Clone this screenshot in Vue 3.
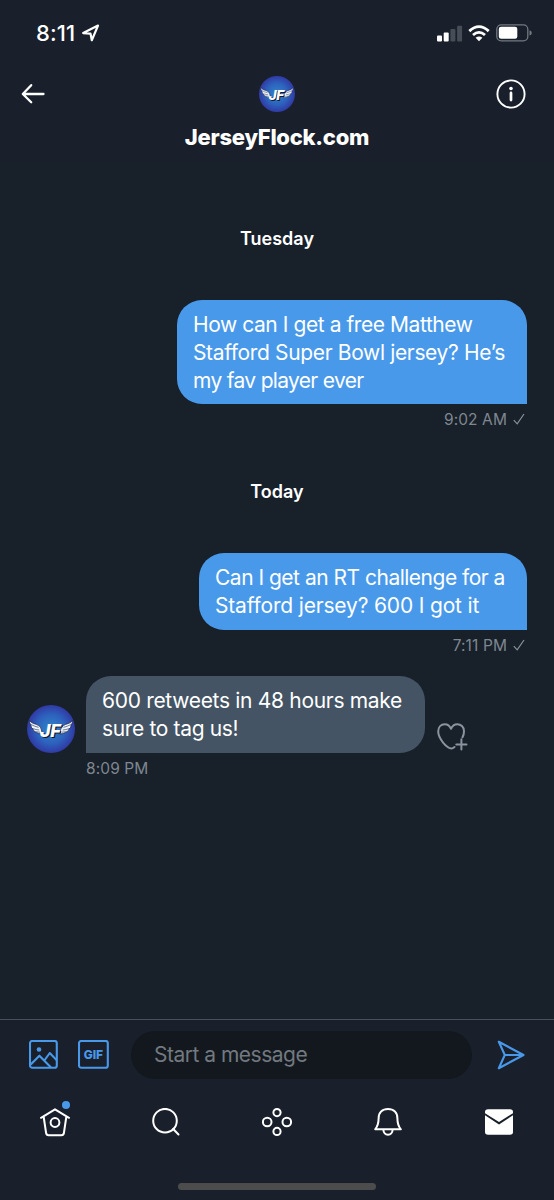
<script setup>
const conversation = [
  {
    day: 'Tuesday',
    cls: 'tuesday',
    messages: [
      { id: 'm1', mine: true, time: '9:02 AM', lines: ['How can I get a free Matthew', 'Stafford Super Bowl jersey? He’s', 'my fav player ever'] },
    ],
  },
  {
    day: 'Today',
    cls: 'today',
    messages: [
      { id: 'm2', mine: true, time: '7:11 PM', lines: ['Can I get an RT challenge for a', 'Stafford jersey? 600 I got it'] },
      { id: 'm3', mine: false, time: '8:09 PM', lines: ['600 retweets in 48 hours make', 'sure to tag us!'] },
    ],
  },
]
</script>

<template>
  <div class="phone">
    <svg class="defs" width="0" height="0" aria-hidden="true">
      <defs>
        <radialGradient id="badge">
          <stop offset="0" stop-color="#3186c8" />
          <stop offset="0.6" stop-color="#2d62bd" />
          <stop offset="1" stop-color="#303aa5" />
        </radialGradient>
        <g id="wing">
          <path d="M2.5 15.5 Q4.2 18.2 9.6 19.5 Q14 20.8 14.5 25 L15.2 29 Q11.2 29 9.2 27.2 Q6 26.2 6 24 Q3.6 22.5 4 20.3 Q2.3 18 2.5 15.5Z" fill="#eef3fa" stroke="#18233e" stroke-width=".7" />
          <path d="M4 19.5 Q8 21.5 11.5 22.4 M6 23.6 Q9 24.8 12.2 25 M9 26.8 L13 27.2" fill="none" stroke="#50617c" stroke-width=".8" />
        </g>
        <symbol id="team" viewBox="0 0 48 48">
          <circle cx="24" cy="24" r="24" fill="url(#badge)" />
          <use href="#wing" />
          <use href="#wing" transform="translate(48 0) scale(-1 1)" />
          <text x="14.3" y="33.2" class="team-text" fill="#101b32">JF</text>
          <text x="13" y="32" class="team-text" fill="#fff">JF</text>
        </symbol>
      </defs>
    </svg>

    <div class="status">
      <span class="clock">8:11</span>
      <svg class="location" width="18" height="18" viewBox="0 0 18 18"><path d="M1.2 9.1 16 1.6 9.8 16.2 8.5 9.6Z" /></svg>
      <div class="indicators">
        <svg width="26" height="17" viewBox="0 0 26 17">
          <rect x="0" y="10.5" width="5" height="6" rx="1" fill="#fff" />
          <rect x="6.7" y="7.5" width="5" height="9" rx="1" fill="#fff" />
          <rect x="13.4" y="4" width="5" height="12.5" rx="1" fill="#474d57" />
          <rect x="20.1" y="0.7" width="5" height="15.8" rx="1" fill="#474d57" />
        </svg>
        <svg class="wifi" width="22" height="17" viewBox="0 0 22 17">
          <g fill="none" stroke="#fff" stroke-width="2.8"><path d="M1.3 6.1Q11 -2.8 20.7 6.1" /><path d="M5 10Q11 4.7 17 10" /></g>
          <path d="M7.6 12.8Q11 10 14.4 12.8L11 16.3Z" fill="#fff" />
        </svg>
        <svg width="36" height="18" viewBox="0 0 36 18">
          <rect x=".8" y=".8" width="31" height="16" rx="4.4" fill="none" stroke="#737981" stroke-width="1.3" />
          <rect x="2.8" y="2.8" width="18.5" height="12" rx="2.3" fill="#fff" />
          <path d="M33.5 6.3q2.3 .6 2.3 2.6t-2.3 2.6z" fill="#737981" />
        </svg>
      </div>
    </div>

    <header>
      <svg class="back" width="24" height="22" viewBox="0 0 24 22"><path d="M10.2 2.2 1.8 11l8.4 8.2M2.2 11H22.5" /></svg>
      <div class="profile">
        <svg class="avatar-small"><use href="#team" /></svg>
        <h1><span>JerseyFlock.com</span></h1>
      </div>
      <svg class="info" width="30" height="30" viewBox="0 0 30 30">
        <circle cx="15" cy="15" r="13.6" fill="none" stroke="#fff" stroke-width="1.9" />
        <circle cx="15" cy="9.5" r="1.8" fill="#fff" /><path d="M15 13.9v7.2" stroke="#fff" stroke-width="2.7" stroke-linecap="round" />
      </svg>
    </header>

    <main>
      <section v-for="group in conversation" :key="group.day" :class="group.cls">
        <h2><span>{{ group.day }}</span></h2>
        <article v-for="m in group.messages" :key="m.id" :class="[m.mine ? 'sent' : 'received', m.id]">
          <div class="message-row">
            <svg v-if="!m.mine" class="avatar"><use href="#team" /></svg>
            <div class="bubble">
              <div v-for="(line, i) in m.lines" :key="line" class="line" :class="'l' + i"><span>{{ line }}</span></div>
            </div>
            <svg v-if="!m.mine" class="react" width="31" height="28" viewBox="0 0 31 28">
              <path d="M25.5 14.3Q27 11.5 27 8.2C27 3.7 23.8 1.2 20.3 1.2Q16 1.2 14 5.8Q12 1.2 7.8 1.2C3.7 1.2 1.2 4.3 1.2 8.6C1.2 15.5 9.8 25.2 14.4 25.4Q15.7 25.5 17.5 24" /><path d="M24.4 16.3v10.2M19.3 21.4h10.2" />
            </svg>
          </div>
          <div class="meta"><span>{{ m.time }}</span><svg v-if="m.mine" width="12" height="12" viewBox="0 0 12 12"><path d="m.8 7.2 3.4 3.7L11 1" /></svg></div>
        </article>
      </section>
    </main>

    <div class="composer">
      <svg width="29" height="29" viewBox="0 0 29 29"><rect x="1" y="1" width="26.8" height="26.8" rx="2.3" /><circle cx="10" cy="9.5" r="2.3" class="solid" /><path d="m1.7 24.5 8.7-8.8L22 27.5M15.3 20.5l5.5-7.5 7 7.4" /></svg>
      <svg class="gif" width="31" height="29" viewBox="0 0 31 29"><rect x="1" y="1" width="28.8" height="26.8" rx="2.3" /><text x="15.4" y="18.8" text-anchor="middle">GIF</text></svg>
      <div class="input"><span>Start a message</span></div>
      <svg class="send" width="28" height="30" viewBox="0 0 28 30"><path d="M1.8 1.8 26.5 15 1.8 28.2 7.8 15Z M7.8 15H26" /></svg>
    </div>

    <nav>
      <div class="home">
        <svg width="30" height="29" viewBox="0 0 30 29"><path d="M1 9.8 15 1.3 29 9.8M3.7 9l2.4 16q.3 2.2 2.5 2.2h12.8q2.2 0 2.5-2.2L26.3 9" /><circle cx="15" cy="14.5" r="4.4" /></svg>
        <i></i>
      </div>
      <div><svg width="28" height="28" viewBox="0 0 28 28"><circle cx="13" cy="12.7" r="11.8" /><path d="m21.2 21 5.3 5.5" /></svg></div>
      <div><svg width="30" height="28" viewBox="0 0 30 28"><circle cx="5.2" cy="14" r="4.3" /><circle cx="15" cy="4.6" r="3.6" /><circle cx="24.8" cy="14" r="4.3" /><circle cx="15" cy="23.4" r="3.6" /></svg></div>
      <div><svg width="28" height="28" viewBox="0 0 28 28"><path d="M1.2 21.3Q4.6 17 4.6 10.5C4.6 4.7 8.3 1 14 1s9.4 3.7 9.4 9.5q0 6.5 3.4 10.8ZM9.3 21.5q.5 5.2 4.7 5.2t4.7-5.2" /></svg></div>
      <div><svg width="28" height="26" viewBox="0 0 28 26"><path class="mail" d="M3 .2h22Q28 .2 28 3v1.2L14 13 0 4.2V3Q0 .2 3 .2ZM0 6.3l14 9.2 14-9.2V23q0 2.7-3 2.7H3Q0 25.7 0 23Z" /></svg></div>
    </nav>
    <div class="home-indicator"></div>
  </div>
</template>

<style>
body { background: #19202b; }
</style>

<style scoped>
* { box-sizing: border-box; }
.phone { width: 554px; height: 1200px; display: flex; flex-direction: column; background: #19202b; color: #fff; font-family: Inter, "Liberation Sans", sans-serif; overflow: hidden; }
.phone > * { flex-shrink: 0; }
svg { display: block; flex: none; }
.defs { position: absolute; }
.team-text { font: italic 800 18px Inter, sans-serif; letter-spacing: -.5px; }
.status { height: 66px; padding: 0 22px 0 36px; display: flex; align-items: center; }
.clock { font-size: 22px; line-height: 24px; font-weight: 500; width: 46px; letter-spacing: .1px; white-space: nowrap; }
.location { margin-top: 0; }
.location path { fill: none; stroke: #fff; stroke-width: 2.2; stroke-linejoin: round; }
.indicators { margin-left: auto; display: flex; align-items: center; }
.indicators svg:last-child { margin-left: 6px; }
.wifi { margin-left: 5px; }
header { height: 96px; padding: 10px 28px 0 21px; display: flex; justify-content: space-between; align-items: flex-start; }
.back { margin-top: 7px; fill: none; stroke: #fff; stroke-width: 2.3; stroke-linecap: round; stroke-linejoin: round; }
.profile { width: 200px; margin-left: 13px; display: flex; flex-direction: column; align-items: center; }
.avatar-small { width: 36px; height: 36px; }
h1 { margin: 10px 0 0; font-size: 22px; line-height: 30px; font-weight: 800; white-space: nowrap; letter-spacing: -.25px; }
.info { margin-top: 3px; }
main { height: 857px; background: #18202a; padding: 61px 27px 0; }
h2 { margin: 0; height: 30px; text-align: center; font-size: 18px; line-height: 32px; font-weight: 600; letter-spacing: 0; }
.today { margin-top: 42px; }
.sent { display: flex; flex-direction: column; align-items: flex-end; margin-top: 47px; }
.received { margin-top: 16px; }
.message-row { display: flex; align-items: flex-end; }
.bubble { height: 77px; padding: 11px 16px 0; border-radius: 25px 25px 0 25px; background: #4999eb; font-size: 21px; line-height: 28px; }
.line { white-space: nowrap; }
.m1 .bubble { width: 350px; height: 104px; }
.m2 .bubble { width: 328px; }
.m3 .bubble { width: 339px; border-radius: 25px 25px 25px 0; background: #445464; }
.m1 .l0 { letter-spacing: -.43px; }
.m1 .l1 { letter-spacing: -.35px; }
.m1 .l2 { letter-spacing: -.68px; }
.m2 .l0 { letter-spacing: -.5px; }
.m2 .l1 { letter-spacing: -.17px; }
.m3 .l0 { letter-spacing: -.31px; }
.m3 .l1 { letter-spacing: -.35px; }
.avatar { width: 48px; height: 48px; margin-right: 11px; }
.react { margin: 0 0 2px 12px; fill: none; stroke: #8b939f; stroke-width: 2; stroke-linecap: round; stroke-linejoin: round; }
.meta { height: 30px; display: flex; align-items: center; gap: 6px; color: #7f8790; font-size: 15.5px; letter-spacing: .1px; }
.sent .meta { padding-right: 2px; }
.meta svg path { fill: none; stroke: #89919a; stroke-width: 1.2; }
.received .meta { padding-left: 59px; }
.composer { height: 70px; border-top: 1px solid #46505a; padding: 0 29px; display: flex; align-items: center; }
.composer svg { fill: none; stroke: #4999eb; stroke-width: 2.1; stroke-linejoin: round; }
.composer .solid { fill: #4999eb; stroke: none; }
.gif { margin-left: 20px; }
.gif text { fill: #4999eb; stroke: none; font: 800 12px Inter, sans-serif; }
.input { width: 341px; height: 48px; margin-left: 22px; border-radius: 24px; background: #12181d; color: #727981; font-size: 21px; line-height: 48px; padding-left: 23px; letter-spacing: -.5px; }
.composer .send { margin-left: 25px; }
nav { display: grid; grid-template-columns: repeat(5, 1fr); height: 66px; }
nav > div { display: flex; justify-content: center; align-items: center; position: relative; }
nav svg { fill: none; stroke: #fff; stroke-width: 2; stroke-linecap: round; stroke-linejoin: round; }
nav .mail { fill: #fff; stroke: none; }
.home i { position: absolute; width: 8px; height: 8px; left: 62px; top: 12px; border-radius: 50%; background: #4999eb; }
.home-indicator { width: 198px; height: 7px; margin: 28px 0 0 178px; border-radius: 4px; background: #4c4c4c; }
</style>
